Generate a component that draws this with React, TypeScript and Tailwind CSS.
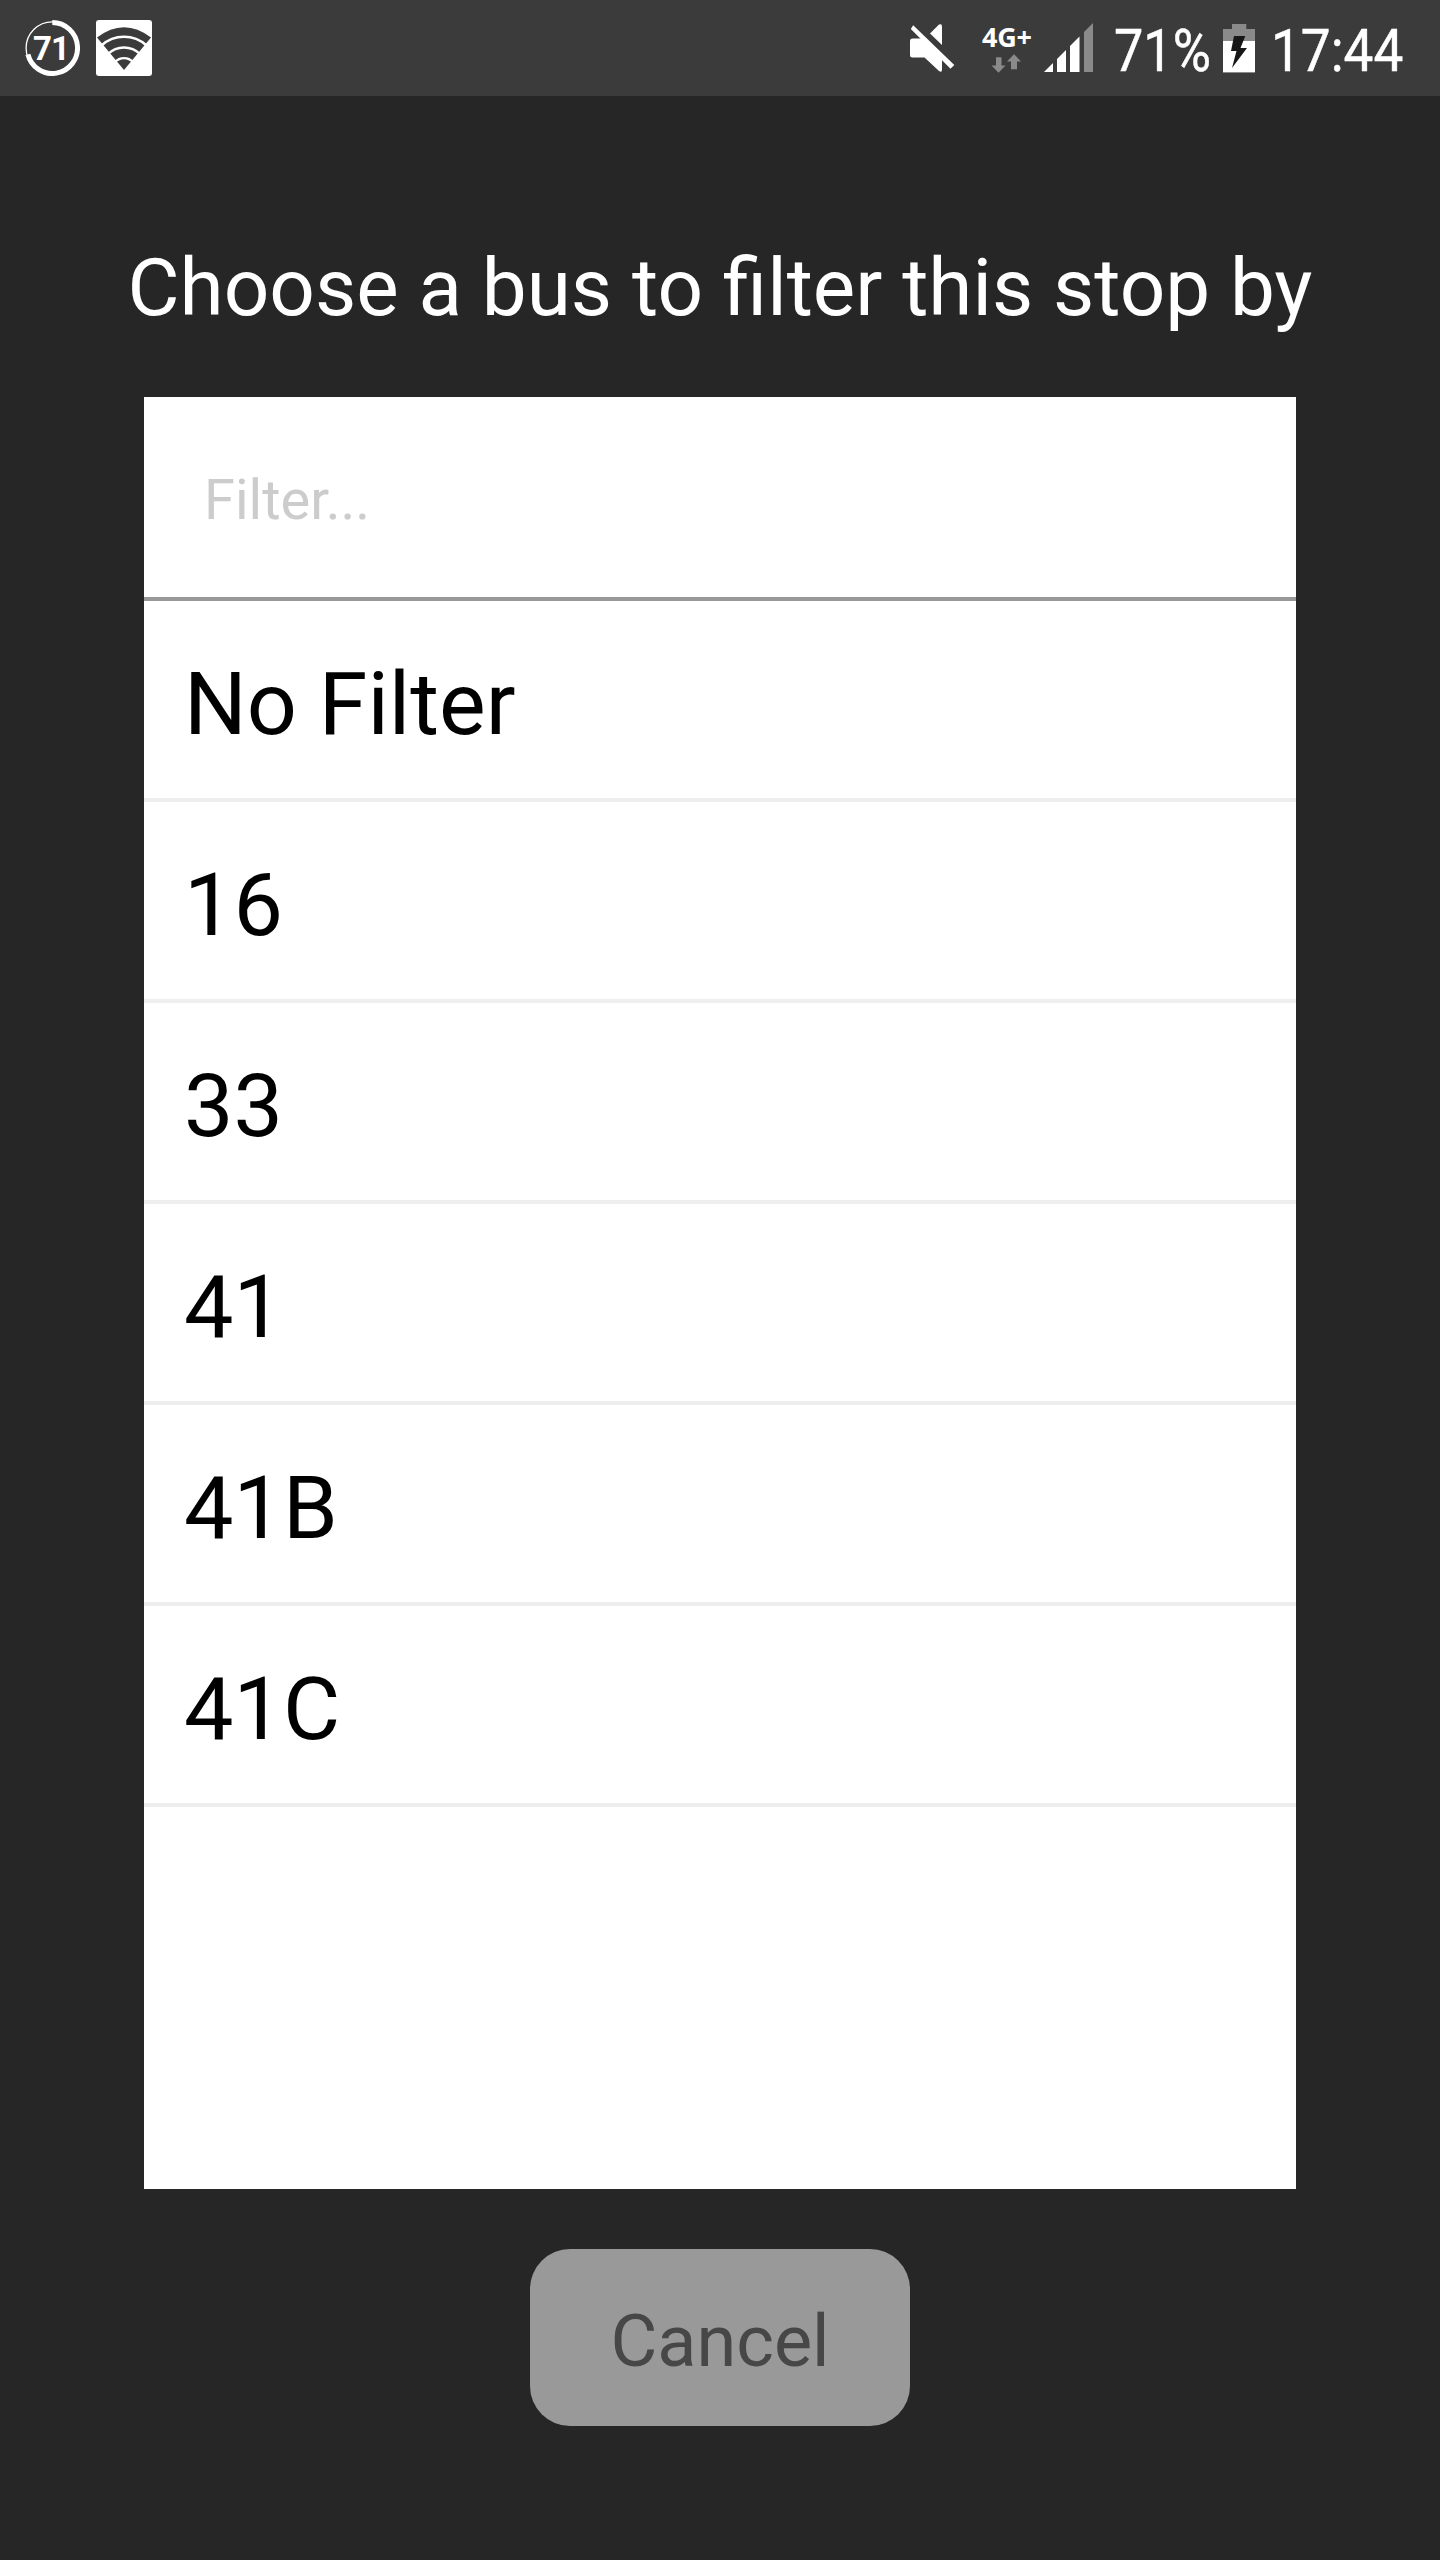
const rows = ['No Filter', '16', '33', '41', '41B', '41C'];

function BatteryRing() {
  return (
    <div className="ml-[25px] mt-5 grid h-14 w-[55px] shrink-0 place-items-center">
      <svg className="col-start-1 row-start-1" width="55" height="56" viewBox="0 0 55 56" fill="none" stroke="#fff">
        <circle cx="27.3" cy="28" r="26.2" strokeWidth="1.3" />
        <path d="M27.3 2.5A25.2 25.5 0 1 1 2.9 34.3" strokeWidth="5" />
      </svg>
      <span className="col-start-1 row-start-1 pr-[3px] text-[33px] font-bold leading-none tracking-[-1px]">71</span>
    </div>
  );
}

function WifiTile() {
  return (
    <svg className="ml-4 mt-5 shrink-0" width="56" height="56" viewBox="0 0 56 56">
      <rect width="56" height="56" rx="3" fill="#fff" />
      <path d="M28 50L1 17.5Q28 -3 55 17.5Z" fill="#3b3b3b" />
      <g fill="none" stroke="#fff" strokeWidth="2.4">
        <path d="M5.5 25.5A33.5 33.5 0 0 1 50.5 25.500" />
        <path d="M12 34A22.8 22.8 0 0 1 44 34" />
        <path d="M19 42A12.3 12.3 0 0 1 37 42" />
      </g>
    </svg>
  );
}

function MuteIcon() {
  return (
    <svg className="ml-[758px] mt-6 shrink-0" width="45" height="48" viewBox="0 0 45 48" fill="#fff">
      <path d="M0 17Q0 14.5 2.5 14.5H12L32 34.500V45.5Q32 49 29 47L14.5 33.5H2.5Q0 33.500 0 31Z" />
      <path d="M20 9.500L29 .5Q32 -.8 32 2.500V21Z" />
      <path d="M3.200 1.200L44.300 41L40.500 44.800L.8 5Z" />
    </svg>
  );
}

function NetworkIcon() {
  return (
    <div className="ml-[26px] mt-[22px] w-[51px] shrink-0">
      <span className="ml-px block whitespace-nowrap font-['Open_Sans',sans-serif] text-[27px] font-bold leading-[30px] tracking-[-0.2px]">4G+</span>
      <svg className="ml-[10px] mt-0.5" width="30" height="19" viewBox="0 0 30 19" fill="#8a8a8a">
        <path d="M5 3.300H10.500V11.500H14.500L7.500 18.700L.5 11.500H5Z" />
        <path d="M20 15.300V7.500H16L23 .2L30 7.500H26V15.300Z" />
      </svg>
    </div>
  );
}

function SignalIcon() {
  return (
    <svg className="ml-3 mt-[23px] shrink-0" width="50" height="49" viewBox="0 0 50 49" fill="#fff">
      <path d="M0 49L9 40V49Z" />
      <path d="M13 49V36L22 27V49Z" />
      <path d="M26 49V23L35.500 13.500V49Z" />
      <path d="M40 49V9L49 0V49Z" fill="#8a8a8a" />
    </svg>
  );
}

function BatteryIcon() {
  return (
    <svg className="ml-[9px] mt-6 shrink-0" width="32" height="49" viewBox="0 0 32 49">
      <path d="M9 0H23.300V5H32V49H0V5H9Z" fill="#8a8a8a" />
      <rect y="17" width="32" height="31" fill="#fff" />
      <path d="M11 12H22.300L17.500 24H24L9 44L13.500 27H8Z" fill="#171717" />
    </svg>
  );
}

function StatusBar() {
  return (
    <header className="flex h-24 w-full items-start overflow-hidden bg-[#3b3b3b] text-white">
      <BatteryRing />
      <WifiTile />
      <MuteIcon />
      <NetworkIcon />
      <SignalIcon />
      <span className="ml-5 mt-4 w-[100px] shrink-0 origin-left scale-x-[0.87] whitespace-nowrap text-[60px] leading-[70px] [-webkit-text-stroke:0.5px_white]">71%</span>
      <BatteryIcon />
      <span className="ml-4 mt-4 w-[150px] shrink-0 origin-left scale-x-[0.885] whitespace-nowrap text-[60px] leading-[70px] [-webkit-text-stroke:0.5px_white]">17:44</span>
    </header>
  );
}

export default function App() {
  return (
    <div className="flex h-[2560px] w-[1440px] flex-col bg-[#262626] font-[Roboto,sans-serif]">
      <StatusBar />
      <h1 className="mt-[145px] h-[94px] text-center text-[80px] leading-[94px] text-white">Choose a bus to filter this stop by</h1>
      <div className="mx-auto mt-[62px] h-[1792px] w-[1152px] bg-white">
        <div className="flex h-[204px] items-center border-b-4 border-[#999] pl-[60px] pt-[6px] text-[56px] text-[#ccc]">Filter...</div>
        {rows.map((r) => (
          <div key={r} className="flex h-[201px] items-center border-b-4 border-[#eee] pl-10 pt-2 text-[88px] text-black">{r}</div>
        ))}
      </div>
      <button className="mx-auto mt-[60px] h-[177px] w-[380px] rounded-[40px] bg-[#999] pt-[9px] text-[72px] text-[#474747]">Cancel</button>
    </div>
  );
}
